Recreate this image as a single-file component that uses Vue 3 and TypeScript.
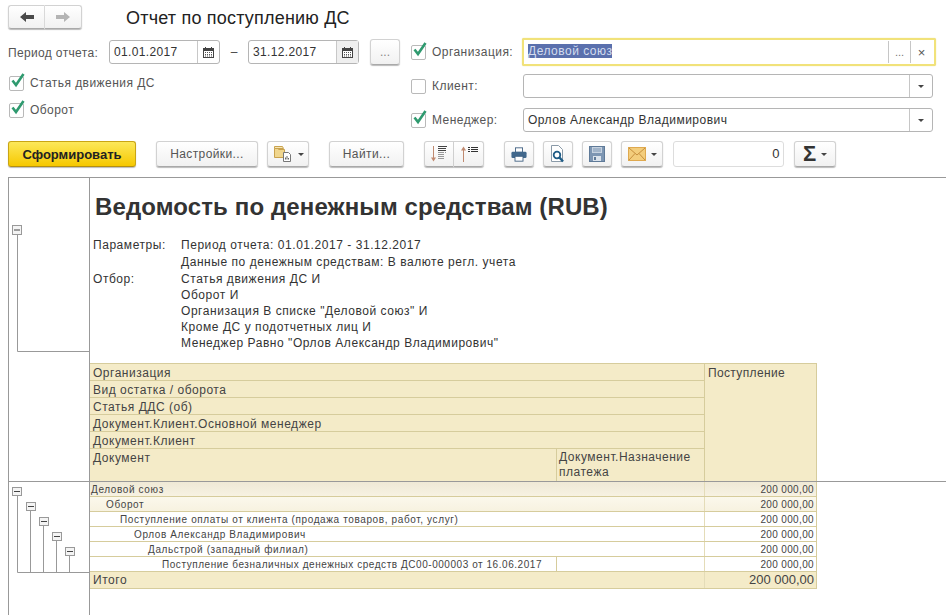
<script setup lang="ts">
const headRows = ['Организация', 'Вид остатка / оборота', 'Статья ДДС (об)', 'Документ.Клиент.Основной менеджер', 'Документ.Клиент']
const filters = [
  ['Параметры:', 'Период отчета: 01.01.2017 - 31.12.2017'],
  ['', 'Данные по денежным средствам: В валюте регл. учета'],
  ['Отбор:', 'Статья движения ДС И'],
  ['', 'Оборот И'],
  ['', 'Организация В списке "Деловой союз" И'],
  ['', 'Кроме ДС у подотчетных лиц И'],
  ['', 'Менеджер Равно "Орлов Александр Владимирович"'],
]
const dataRows = [
  { text: 'Деловой союз', indent: 1, cls: 'lvl0' },
  { text: 'Оборот', indent: 16, cls: 'lvl1' },
  { text: 'Поступление оплаты от клиента (продажа товаров, работ, услуг)', indent: 30, cls: '' },
  { text: 'Орлов Александр Владимирович', indent: 44, cls: '' },
  { text: 'Дальстрой (западный филиал)', indent: 58, cls: '' },
]
const boxes = [
  [12, 486],
  [26, 501],
  [39, 516],
  [52, 531],
  [65, 546],
]
</script>

<template>
  <div class="page">
    <header class="head">
      <div class="nav">
        <button class="btn nav-btn">
          <svg width="16" height="12" viewBox="0 0 16 12"><path d="M1 6l6-5v3h8v4H7v3z" fill="#4a4a4a" /></svg>
        </button>
        <button class="btn nav-btn">
          <svg width="16" height="12" viewBox="0 0 16 12"><path d="M15 6L9 1v3H1v4h8v3z" fill="#b4b4b4" /></svg>
        </button>
      </div>
      <h1 class="title">Отчет по поступлению ДС</h1>
    </header>

    <section class="form">
      <div class="form-left">
        <div class="period">
          <span class="lbl period-lbl">Период отчета:</span>
          <div class="field date">
            <span class="val">01.01.2017</span>
            <span class="cal">
              <svg width="11" height="11" viewBox="0 0 11 11"><path d="M2.5 0v2M8.500 0v2" stroke="#444" /><rect x=".5" y="1.500" width="10" height="9" fill="#fff" stroke="#444" /><rect x="1" y="2" width="9" height="2" fill="#444" /><path d="M2 5.500h7M2 7.500h7M2 9h7" stroke="#555" stroke-dasharray="1 1" /></svg>
            </span>
          </div>
          <span class="dash">–</span>
          <div class="field date">
            <span class="val">31.12.2017</span>
            <span class="cal shaded">
              <svg width="11" height="11" viewBox="0 0 11 11"><path d="M2.5 0v2M8.500 0v2" stroke="#444" /><rect x=".5" y="1.500" width="10" height="9" fill="#fff" stroke="#444" /><rect x="1" y="2" width="9" height="2" fill="#444" /><path d="M2 5.500h7M2 7.500h7M2 9h7" stroke="#555" stroke-dasharray="1 1" /></svg>
            </span>
          </div>
          <button class="btn dots-btn">...</button>
        </div>
        <label class="check-row first">
          <span class="check"><svg width="18" height="17" viewBox="0 0 18 17"><path d="M3.500 7.500l3.500 4.500 7.500-11" fill="none" stroke="#2f9a6f" stroke-width="2.600" /></svg></span>
          <span class="lbl">Статья движения ДС</span>
        </label>
        <label class="check-row">
          <span class="check"><svg width="18" height="17" viewBox="0 0 18 17"><path d="M3.500 7.500l3.500 4.500 7.500-11" fill="none" stroke="#2f9a6f" stroke-width="2.600" /></svg></span>
          <span class="lbl">Оборот</span>
        </label>
      </div>

      <div class="form-right">
        <div class="f-row org">
          <span class="check"><svg width="18" height="17" viewBox="0 0 18 17"><path d="M3.500 7.500l3.500 4.500 7.500-11" fill="none" stroke="#2f9a6f" stroke-width="2.600" /></svg></span>
          <span class="lbl f-lbl">Организация:</span>
          <div class="field focus">
            <span class="val grow"><span class="sel">Деловой союз</span></span>
            <span class="side">...</span>
            <span class="side x">×</span>
          </div>
        </div>
        <div class="f-row">
          <span class="check"></span>
          <span class="lbl f-lbl">Клиент:</span>
          <div class="field wide">
            <span class="val grow"></span>
            <span class="side"><i class="caret"></i></span>
          </div>
        </div>
        <div class="f-row">
          <span class="check"><svg width="18" height="17" viewBox="0 0 18 17"><path d="M3.500 7.500l3.500 4.500 7.500-11" fill="none" stroke="#2f9a6f" stroke-width="2.600" /></svg></span>
          <span class="lbl f-lbl">Менеджер:</span>
          <div class="field wide">
            <span class="val grow">Орлов Александр Владимирович</span>
            <span class="side"><i class="caret"></i></span>
          </div>
        </div>
      </div>
    </section>

    <section class="toolbar">
      <button class="btn primary">Сформировать</button>
      <button class="btn text-btn settings">Настройки...</button>
      <button class="btn icon-drop folder">
        <svg width="20" height="18" viewBox="0 0 20 18">
          <path d="M1.500 3.500h3l1 1h6v8h-10z" fill="#f0d68e" stroke="#c9a24e" />
          <path d="M1.500 1.500h8l1 2h-9z" fill="#f7e7b5" stroke="#c9a24e" />
          <path d="M10.500 7.500h5l2 2v7h-7z" fill="#fff" stroke="#777" />
          <path d="M12.500 14.500v-2M14 14.500v-3.500M15.500 14.500v-1.500" stroke="#666" />
        </svg>
        <i class="caret"></i>
      </button>
      <button class="btn text-btn find">Найти...</button>
      <div class="group">
        <button class="btn sort">
          <svg width="22" height="18" viewBox="0 0 22 18">
            <path d="M5.500 1v13" stroke="#c08a70" /><path d="M3 12.500l2.500 4 2.500-4z" fill="#c08a70" />
            <path d="M10 1.500h9M10 3.500h8M10 5.500h8" stroke="#444" />
            <path d="M10 7.500h8M10 9.500h7M10 11.500h7M10 13.500h6" stroke="#999" stroke-dasharray="6 1" />
          </svg>
        </button>
        <button class="btn sort">
          <svg width="22" height="18" viewBox="0 0 22 18">
            <path d="M5.500 4v13" stroke="#c08a70" /><path d="M3 5.500l2.500-4 2.500 4z" fill="#c08a70" />
            <path d="M10 2.500h2M13 2.500h7M10 4.500h2M13 4.500h7M10 6.500h2M13 6.500h7" stroke="#333" />
          </svg>
        </button>
      </div>
      <button class="btn square print">
        <svg width="16" height="15" viewBox="0 0 18 16">
          <rect x="5" y=".5" width="8" height="5" fill="#fff" stroke="#3e5f80" />
          <rect x=".5" y="5" width="17" height="7" rx="1.500" fill="#41688c" />
          <rect x="4.500" y="10" width="9" height="5.500" fill="#fff" stroke="#3e5f80" />
        </svg>
      </button>
      <button class="btn square">
        <svg width="16" height="18" viewBox="0 0 16 18">
          <path d="M1.500 .5h7l4 4v12h-11z" fill="#fff" stroke="#8a9aa8" />
          <circle cx="7" cy="10" r="3.300" fill="#fff" stroke="#1f5c86" stroke-width="1.800" />
          <path d="M9.500 12.500l3.500 4" stroke="#1f5c86" stroke-width="2.400" />
        </svg>
      </button>
      <button class="btn square">
        <svg width="16" height="16" viewBox="0 0 16 16">
          <rect x=".5" y=".5" width="15" height="15" fill="#7d96b3" stroke="#5f7a98" />
          <rect x="3" y="1" width="10" height="6" fill="#c6d2e0" />
          <path d="M4 3h8M4 5h8" stroke="#7d96b3" />
          <rect x="4" y="10" width="8" height="5" fill="#dbe3ec" />
          <rect x="5" y="11" width="2" height="3" fill="#5f7a98" />
        </svg>
      </button>
      <button class="btn icon-drop mail">
        <svg width="18" height="14" viewBox="0 0 18 14">
          <rect x=".5" y=".5" width="17" height="13" fill="#f3cd7c" stroke="#dfa94f" />
          <path d="M1 1l8 7 8-7M1 13l6-6.500M17 13l-6-6.500" fill="none" stroke="#c78f3c" />
        </svg>
        <i class="caret"></i>
      </button>
      <div class="field sum"><span class="val right">0</span></div>
      <button class="btn icon-drop sigma">
        <span class="sigma-glyph">Σ</span>
        <i class="caret"></i>
      </button>
    </section>

    <main class="report">
      <div class="part upper">
        <div class="gutter">
          <svg width="80" height="303" viewBox="9 178 80 303">
            <path d="M17.500 229v122.500H89" fill="none" stroke="#999" />
            <rect x="12.500" y="225.500" width="9" height="9" fill="#f4f4f4" stroke="#999" />
            <path d="M14 230h6" stroke="#444" />
          </svg>
        </div>
        <div class="content">
          <h2 class="rep-title">Ведомость по денежным средствам (RUB)</h2>
          <div class="params">
            <template v-for="(f, i) in filters" :key="i">
              <span>{{ f[0] }}</span>
              <span>{{ f[1] }}</span>
            </template>
          </div>
          <div class="thead">
            <div class="head-left">
              <div v-for="h in headRows" :key="h" class="th-row">{{ h }}</div>
              <div class="th-split">
                <div class="th-doc">Документ</div>
                <div class="th-pay">Документ.Назначение платежа</div>
              </div>
            </div>
            <div class="th-sum">Поступление</div>
          </div>
        </div>
      </div>

      <div class="part lower">
        <div class="gutter">
          <svg width="80" height="120" viewBox="9 481 80 120">
            <path d="M17.500 490v81.500H89M30.500 505v66M43.500 520v51M56.500 535v36M69.500 550v21" fill="none" stroke="#999" />
            <g v-for="b in boxes" :key="b[0]">
              <rect :x="b[0] + 0.5" :y="b[1] + 0.5" width="9" height="8" fill="#f4f4f4" stroke="#999" />
              <path :d="`M${b[0] + 2} ${b[1] + 4.5}h6`" stroke="#444" />
            </g>
          </svg>
        </div>
        <div class="content">
          <div class="tbody">
            <div v-for="r in dataRows" :key="r.text" class="d-row" :class="r.cls">
              <div class="d-name" :style="{ paddingLeft: r.indent + 'px' }">{{ r.text }}</div>
              <div class="d-sum">200 000,00</div>
            </div>
            <div class="d-row">
              <div class="d-doc">Поступление безналичных денежных средств ДС00-000003 от 16.06.2017</div>
              <div class="d-pay"></div>
              <div class="d-sum">200 000,00</div>
            </div>
            <div class="d-row total">
              <div class="d-name total-name">Итого</div>
              <div class="d-sum total-sum">200 000,00</div>
            </div>
          </div>
        </div>
      </div>
    </main>
  </div>
</template>

<style>
html, body { margin: 0; background: #fff; overflow: hidden; }
</style>

<style scoped>
.page {
  width: 946px;
  height: 615px;
  overflow: hidden;
  box-sizing: border-box;
  padding-top: 5px;
  font-family: "Liberation Sans", Arial, sans-serif;
  font-size: 12px;
  color: #333;
  display: flex;
  flex-direction: column;
}
button { font-family: inherit; padding: 0; margin: 0; }
.btn {
  box-sizing: border-box;
  border: 1px solid #d2d2d2;
  border-bottom-color: #a9a9a9;
  border-radius: 3px;
  background: linear-gradient(#fff, #f1f1f1);
  box-shadow: 0 1px 1px #bbb;
  display: flex;
  align-items: center;
  justify-content: center;
  color: #555;
  font-size: 12px;
}
.head { display: flex; align-items: center; height: 24px; padding-left: 8px; }
.nav { display: flex; width: 74px; }
.nav-btn { width: 37px; height: 24px; }
.nav-btn:first-child { border-radius: 3px 0 0 3px; border-right: 1px solid #ddd; }
.nav-btn:last-child { border-radius: 0 3px 3px 0; border-left: 0; }
.title { margin: 2px 0 0 44px; font-size: 18px; font-weight: 400; color: #222; letter-spacing: .2px; white-space: nowrap; }

.form { display: flex; margin-top: 9px; height: 93px; }
.form-left { width: 411px; padding-left: 8px; box-sizing: border-box; flex: none; }
.period { display: flex; align-items: center; height: 26px; margin-top: 1px; }
.lbl { color: #555; letter-spacing: .45px; white-space: nowrap; }
.period-lbl { width: 101px; flex: none; letter-spacing: .35px; padding-top: 1px; }
.field {
  box-sizing: border-box;
  border: 1px solid #b5b5b5;
  border-radius: 3px;
  background: #fff;
  display: flex;
  align-items: stretch;
  color: #333;
}
.val { padding: 0 4px; line-height: 22px; letter-spacing: .5px; white-space: nowrap; }
.grow { flex: 1; }
.date { width: 111px; height: 24px; }
.date .val { flex: 1; letter-spacing: .35px; }
.cal { width: 21px; border-left: 1px solid #c8c8c8; display: flex; align-items: center; justify-content: center; }
.shaded { background: #efefef; }
.dash { width: 28px; text-align: center; color: #444; }
.dots-btn { width: 30px; height: 26px; margin-left: 11px; color: #888; }
.check-row { display: flex; align-items: center; height: 16px; gap: 6px; }
.check-row.first { margin-top: 10px; margin-bottom: 11px; }
.check {
  box-sizing: border-box;
  width: 15px;
  height: 15px;
  flex: none;
  border: 1px solid #b9b9b9;
  border-radius: 2px;
  background: #fff;
  position: relative;
  display: block;
}
.check svg { position: absolute; left: -1px; top: -4px; }
.form-left .check { margin-left: 1px; }

.form-right { flex: 1; padding-right: 13px; }
.f-row { display: flex; align-items: center; height: 24px; margin-bottom: 10px; }
.org { height: 28px; margin-bottom: 8px; }
.f-lbl { margin-left: 6px; width: 91px; flex: none; }
.wide { flex: 1; height: 24px; margin-right: 0; }
.focus {
  flex: 1;
  height: 28px;
  margin-left: -1px;
  margin-right: -3px;
  border: 2px solid #f1e27a;
  border-radius: 2px;
  box-shadow: 0 0 1px #e0cf60;
  padding: 1px 2px 1px 0;
}
.focus .val { line-height: 20px; padding-left: 4px; }
.sel { background: #5a70ad; color: #d3dcef; display: inline-block; line-height: 14px; }
.side {
  width: 21px;
  border-left: 1px solid #c6c6c6;
  display: flex;
  align-items: center;
  justify-content: center;
  color: #777;
  font-size: 11px;
}
.wide .side { width: 22px; }
.x { color: #555; font-size: 13px; }
.caret {
  display: inline-block;
  width: 0;
  height: 0;
  border-left: 3px solid transparent;
  border-right: 3px solid transparent;
  border-top: 3px solid #444;
}

.toolbar { display: flex; align-items: center; height: 26px; padding-left: 8px; margin-top: 10px; flex: none; }
.primary {
  width: 128px;
  height: 26px;
  background: linear-gradient(#fce85a, #f6c800);
  border: 1px solid #c9a514;
  border-bottom-color: #b48f10;
  font-weight: 700;
  color: #222;
  font-size: 13px;
}
.text-btn { height: 26px; color: #555; letter-spacing: .4px; }
.settings { width: 102px; margin-left: 20px; }
.find { width: 75px; margin-left: 20px; }
.icon-drop { height: 26px; gap: 5px; }
.folder { width: 42px; margin-left: 9px; }
.group { display: flex; margin-left: 20px; }
.sort { width: 30px; height: 26px; }
.sort:first-child { border-radius: 3px 0 0 3px; }
.sort:last-child { border-radius: 0 3px 3px 0; border-left: 0; }
.square { width: 30px; height: 26px; margin-left: 9px; }
.print { margin-left: 20px; }
.mail { width: 42px; margin-left: 9px; }
.sum { width: 111px; height: 26px; margin-left: 10px; border-color: #ddd; justify-content: flex-end; }
.right { line-height: 24px; padding-right: 3px; font-size: 13px; }
.sigma { width: 42px; margin-left: 10px; }
.sigma-glyph { font-size: 22px; line-height: 20px; color: #333; font-weight: 700; }

.report {
  margin: 10px 0 0 8px;
  flex: 1;
  border-top: 1px solid #999;
  border-left: 1px solid #999;
  min-height: 0;
}
.part { display: flex; }
.upper { height: 303px; }
.lower { border-top: 1px solid #999; height: 134px; }
.gutter { width: 80px; flex: none; border-right: 1px solid #999; }
.gutter svg { display: block; }
.content { flex: 1; min-width: 0; }
.rep-title { margin: 15px 0 0 5px; font-size: 24px; line-height: 28px; font-weight: 700; letter-spacing: .12px; color: #333; white-space: nowrap; }
.params {
  margin: 16px 0 0 3px;
  display: grid;
  grid-template-columns: 88px 1fr;
  grid-template-rows: 17px 17px;
  grid-auto-rows: 16px;
  line-height: 17px;
  letter-spacing: .55px;
}
.thead {
  margin-top: 12px;
  width: 727px;
  display: flex;
  background: #f4ebc8;
  box-sizing: border-box;
  border-top: 1px solid #d6cc9c;
  color: #444;
  letter-spacing: .52px;
}
.head-left { width: 614px; flex: none; }
.th-row { height: 17px; box-sizing: border-box; border-bottom: 1px solid #d6cc9c; padding-left: 3px; line-height: 18px; }
.th-split { display: flex; height: 32px; }
.th-doc { width: 466px; box-sizing: border-box; padding-left: 3px; line-height: 18px; }
.th-pay { flex: 1; box-sizing: border-box; border-left: 1px solid #d6cc9c; padding: 1px 0 0 2px; line-height: 15px; }
.th-sum { flex: 1; box-sizing: border-box; border-left: 1px solid #d6cc9c; border-right: 1px solid #d6cc9c; padding-left: 3px; line-height: 18px; letter-spacing: .35px; }

.tbody { width: 727px; font-size: 10px; color: #444; letter-spacing: .62px; }
.d-row { display: flex; height: 15px; box-sizing: border-box; border-bottom: 1px solid #d6cc9c; line-height: 15px; }
.d-name { width: 614px; box-sizing: border-box; white-space: nowrap; }
.d-doc { width: 466px; box-sizing: border-box; padding-left: 72px; white-space: nowrap; letter-spacing: .55px; }
.d-pay { width: 148px; box-sizing: border-box; border-left: 1px solid #d6cc9c; }
.d-sum { flex: 1; box-sizing: border-box; text-align: right; padding-right: 2px; border-left: 1px solid #e4dcb8; border-right: 1px solid #d6cc9c; letter-spacing: .35px; }
.lvl0 { background: linear-gradient(#efe9d6, #f7f2e2); }
.lvl1 { background: linear-gradient(#fbf8ec, #f7f2e0); }
.total { height: 17px; background: #f4ebc8; font-size: 12px; line-height: 16px; }
.total-name { padding-left: 3px; letter-spacing: .55px; }
.total-sum { font-size: 13px; letter-spacing: 0; }
</style>
